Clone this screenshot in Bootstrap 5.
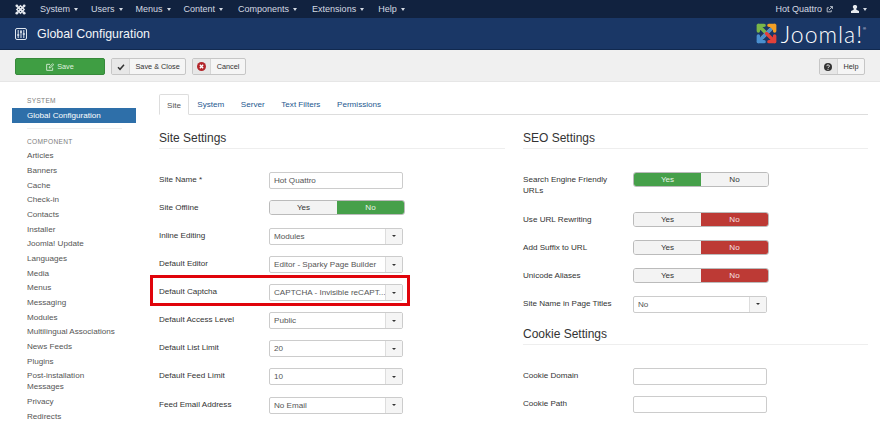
<!DOCTYPE html>
<html lang="en">
<head>
<meta charset="utf-8">
<title>Global Configuration</title>
<link href="https://cdn.jsdelivr.net/npm/bootstrap@5.3.0/dist/css/bootstrap.min.css" rel="stylesheet">
<style>
html,body{height:424px;overflow:hidden}
body{font-family:"Liberation Sans",Arial,sans-serif;font-size:8.1px;line-height:11px;color:#333;background:#fff}
.topbar{height:18px;background:#11223f;color:#d4dae3;padding-left:15px}
.topbar a{color:#d4dae3;text-decoration:none;font-size:9px}
.menu-row{margin-left:14px;gap:13px}
.mnu-wide{margin-right:2px}
.mnu-extra{margin-right:1px}
.caret-d{display:inline-block;width:0;height:0;border-left:2.4px solid transparent;border-right:2.4px solid transparent;border-top:3px solid #d4dae3;margin-left:4px;vertical-align:middle}
.user-menu{margin:0 13px 0 18px}
.headbar{height:32px;background:#1a3766;border-bottom:1px solid #11294f;color:#fff;padding-left:15px}
.headbar h1{font-size:12.4px;font-weight:400;margin:0 0 0 10px;color:#f3f5f8;line-height:32px;padding-top:1px}
.brand-box{margin-right:14px}
.brand-word{font-size:23px;letter-spacing:1px;color:#fff;margin-left:3px;font-family:Lato,"Liberation Sans",sans-serif;font-weight:300;line-height:30px}
.brand-reg{font-size:4px;line-height:4px;align-self:flex-start;margin-top:8px;color:#fff}
.toolbar{height:32px;background:#f0f0f0;border-bottom:1px solid #e6e6e6;padding:8px 15px 0}
.tbtn{height:17px;background:#f5f5f5;border:1px solid #c6c6c6;border-radius:2px;font-size:7.3px;color:#333;line-height:15px;margin-right:6px}
.tbtn .ic{width:18px;height:15px;background:#e7e7e7;border-right:1px solid #d6d6d6}
.tbtn .lbl{padding:0 5.5px}
.savebtn{width:90px;height:17px;background:#3f9e43;border:1px solid #37893b;border-radius:2px;color:#dff0df;font-size:7.3px;line-height:15px;margin-right:6px;gap:3px}
.helpbtn{margin:0}
.main-area{padding:0 0 0 12px}
.side{width:124px;flex:none;padding-top:13px}
.side-head{color:#7d7d7d;font-size:6.6px;letter-spacing:.3px;line-height:11px;padding-left:15px;height:11px}
.side-active{background:#2e6fa9;color:#fff;height:15px;line-height:15px;padding-left:15px;margin-top:2px}
.side-rule{height:1px;background:#efefef;margin:5px 14px 7px 15px}
.side-link{display:block;color:#555;padding:1.83px 0 1.83px 15px;width:105px;text-decoration:none;line-height:11px}
.first-link{margin-top:1.6px}
.content-area{padding:0 12px 0 23px;flex:1;min-width:0}
.tabrow{height:21px;border-bottom:1px solid #ddd;margin-top:12px;gap:0}
.tabitem{height:21px;line-height:21px;padding:0 8.3px;color:#25588f;text-decoration:none}
.tab-on{background:#fff;border:1px solid #ddd;border-bottom-color:#fff;border-radius:2px 2px 0 0;color:#555;padding:0 7px}
.cols{margin-top:15px}
.col-left{width:364px;flex:none}
.col-right{flex:1;min-width:0}
.sec-title{font-size:12px;font-weight:400;color:#333;line-height:16px;margin:0;border-bottom:1px solid #eee;height:19px}
.sec-left{margin-right:18px}
.left-form{padding-top:22.8px}
.form-line{height:28.1px;display:flex;align-items:flex-start}
.form-label{width:110px;flex:none;padding:2px 12px 0 0;color:#333}
.txt{width:134px;height:17px;border:1px solid #ccc;border-radius:2px;padding:0 4px;line-height:15px;color:#555;background:#fff}
.sel{width:134px;height:17px;border:1px solid #ccc;border-radius:2px;color:#555;background:#fff;line-height:15px;display:flex}
.sel .val{flex:1;padding:0 4px;overflow:hidden;white-space:nowrap;min-width:0}
.sel .arr{width:17px;flex:none;background:#f5f5f5;border-left:1px solid #ddd;display:flex;align-items:center;justify-content:center}
.caret-k{display:block;width:0;height:0;border-left:2.2px solid transparent;border-right:2.2px solid transparent;border-top:2.8px solid #333}
.tog{width:136px;height:15px;margin-top:.5px;display:flex;border:1px solid #bbb;border-radius:3px;overflow:hidden;text-align:center;line-height:13px}
.tog span{flex:1;background:#f3f3f3;color:#333}
.tog .on-g{background:#46a04a;color:#e8f4e8}
.tog .on-r{background:#bd3a35;color:#f6e2e2}
.capt-frame{position:absolute;left:150px;top:275px;width:260px;height:31px;border:3px solid #e0040b;pointer-events:none}
.right-form{padding-top:22.8px}
.form-line.tall{height:39.8px}
.gap-title{margin-top:2px;margin-bottom:22.7px}
</style>
</head>
<body>
<div class="topbar d-flex align-items-center">
  <svg width="11" height="11" viewBox="0 0 24 24" aria-hidden="true"><path d="M5 5l14 14M19 5L5 19" stroke="#e4e8ee" stroke-width="4"/><path d="M12 4l8 8-8 8-8-8z" fill="none" stroke="#e4e8ee" stroke-width="3"/><circle cx="4" cy="4" r="3" fill="#e4e8ee"/><circle cx="20" cy="4" r="3" fill="#e4e8ee"/><circle cx="4" cy="20" r="3" fill="#e4e8ee"/><circle cx="20" cy="20" r="3" fill="#e4e8ee"/></svg>
  <div class="d-flex menu-row flex-grow-1">
    <a href="#">System<i class="caret-d"></i></a><a href="#">Users<i class="caret-d"></i></a><a href="#">Menus<i class="caret-d"></i></a><a href="#" class="mnu-wide">Content<i class="caret-d"></i></a><a href="#" class="mnu-wide">Components<i class="caret-d"></i></a><a href="#" class="mnu-extra">Extensions<i class="caret-d"></i></a><a href="#">Help<i class="caret-d"></i></a>
  </div>
  <a href="#" class="d-flex align-items-center gap-1">Hot Quattro
    <svg width="7" height="7" viewBox="0 0 12 12" aria-hidden="true"><path d="M9 7v3H2V3h3M7 1h4v4M11 1L5 7" fill="none" stroke="#d4dae3" stroke-width="1.4"/></svg></a>
  <span class="d-flex align-items-center user-menu">
    <svg width="8" height="8" viewBox="0 0 12 12" aria-hidden="true"><path d="M6 0a3 3 0 0 1 2 5.4V7l4 2v3H0V9l4-2V5.400A3 3 0 0 1 6 0z" fill="#e8ebef"/></svg><i class="caret-d"></i>
  </span>
</div>
<div class="headbar d-flex align-items-center">
  <svg width="12" height="12" viewBox="0 0 12 12" aria-hidden="true"><rect x=".5" y=".5" width="11" height="11" rx="1.500" fill="none" stroke="#dfe6ef"/><path d="M3.200 2v8M6 2v8M8.800 2v8" stroke="#dfe6ef"/><path d="M2.200 7h2M5 4h2M7.800 6h2" stroke="#dfe6ef" stroke-width="1.500"/></svg>
  <h1 class="flex-grow-1">Global Configuration</h1>
  <span class="d-flex align-items-center brand-box">
    <svg width="23" height="23" viewBox="0 0 24 24" aria-hidden="true">
      <g fill="none" stroke-width="3.600" stroke-linecap="round" stroke-linejoin="round">
        <path d="M3.500 9.500V3.500M3.500 3.500h6M3.500 3.500l8 8" stroke="#7ab648"/>
        <path d="M20.500 3.500h-6M20.500 3.500v6M20.500 3.500L8 16" stroke="#f4a025"/>
        <path d="M3.500 14.500v6M3.500 20.500h6M3.500 20.500L16 8" stroke="#4a90d0"/>
        <path d="M20.500 14.500v6M20.500 20.500h-6M20.500 20.500L12 12" stroke="#e2413a"/>
      </g>
    </svg>
    <span class="brand-word">Joomla!</span><span class="brand-reg">®</span>
  </span>
</div>
<div class="toolbar d-flex">
  <div class="savebtn d-flex align-items-center justify-content-center">
    <svg width="8" height="8" viewBox="0 0 12 12" aria-hidden="true"><path d="M10 7v4H1V2h5M5 6l5-5 1.500 1.500-5 5H5z" fill="none" stroke="#dff0df" stroke-width="1.300"/></svg>Save
  </div>
  <div class="tbtn d-flex">
    <span class="ic d-flex align-items-center justify-content-center"><svg width="8" height="8" viewBox="0 0 12 12" aria-hidden="true"><path d="M1.500 6.500l3 3 6-7" fill="none" stroke="#333" stroke-width="2.200"/></svg></span><span class="lbl">Save &amp; Close</span>
  </div>
  <div class="tbtn d-flex">
    <span class="ic d-flex align-items-center justify-content-center"><svg width="9" height="9" viewBox="0 0 12 12" aria-hidden="true"><circle cx="6" cy="6" r="6" fill="#b3262b"/><path d="M3.800 3.800l4.400 4.400M8.200 3.800l-4.400 4.400" stroke="#fff" stroke-width="1.800"/></svg></span><span class="lbl">Cancel</span>
  </div>
  <div class="tbtn helpbtn d-flex ms-auto">
    <span class="ic d-flex align-items-center justify-content-center"><svg width="8" height="8" viewBox="0 0 12 12" aria-hidden="true"><circle cx="6" cy="6" r="6" fill="#333"/><path d="M4.200 4.700a1.900 1.900 0 1 1 2.700 1.700c-.6.300-.9.600-.9 1.200" fill="none" stroke="#fff" stroke-width="1.300"/><circle cx="6" cy="9.400" r=".9" fill="#fff"/></svg></span><span class="lbl">Help</span>
  </div>
</div>
<div class="main-area d-flex">
  <nav class="side">
    <div class="side-head">SYSTEM</div>
    <div class="side-active">Global Configuration</div>
    <div class="side-rule"></div>
    <div class="side-head">COMPONENT</div>
    <a class="side-link first-link" href="#">Articles</a>
    <a class="side-link" href="#">Banners</a>
    <a class="side-link" href="#">Cache</a>
    <a class="side-link" href="#">Check-in</a>
    <a class="side-link" href="#">Contacts</a>
    <a class="side-link" href="#">Installer</a>
    <a class="side-link" href="#">Joomla! Update</a>
    <a class="side-link" href="#">Languages</a>
    <a class="side-link" href="#">Media</a>
    <a class="side-link" href="#">Menus</a>
    <a class="side-link" href="#">Messaging</a>
    <a class="side-link" href="#">Modules</a>
    <a class="side-link" href="#">Multilingual Associations</a>
    <a class="side-link" href="#">News Feeds</a>
    <a class="side-link" href="#">Plugins</a>
    <a class="side-link" href="#">Post-installation Messages</a>
    <a class="side-link" href="#">Privacy</a>
    <a class="side-link" href="#">Redirects</a>
  </nav>
  <div class="content-area">
    <div class="tabrow d-flex">
      <a class="tabitem tab-on" href="#">Site</a>
      <a class="tabitem" href="#">System</a>
      <a class="tabitem" href="#">Server</a>
      <a class="tabitem" href="#">Text Filters</a>
      <a class="tabitem" href="#">Permissions</a>
    </div>
    <div class="cols d-flex">
      <div class="col-left">
        <h2 class="sec-title sec-left">Site Settings</h2>
        <div class="left-form">
          <div class="form-line"><div class="form-label">Site Name *</div><div class="txt">Hot Quattro</div></div>
          <div class="form-line"><div class="form-label">Site Offline</div><div class="tog"><span>Yes</span><span class="on-g">No</span></div></div>
          <div class="form-line"><div class="form-label">Inline Editing</div><div class="sel"><span class="val">Modules</span><span class="arr"><i class="caret-k"></i></span></div></div>
          <div class="form-line"><div class="form-label">Default Editor</div><div class="sel"><span class="val">Editor - Sparky Page Builder</span><span class="arr"><i class="caret-k"></i></span></div></div>
          <div class="form-line"><div class="form-label">Default Captcha</div><div class="sel"><span class="val">CAPTCHA - Invisible reCAPT...</span><span class="arr"><i class="caret-k"></i></span></div></div>
          <div class="form-line"><div class="form-label">Default Access Level</div><div class="sel"><span class="val">Public</span><span class="arr"><i class="caret-k"></i></span></div></div>
          <div class="form-line"><div class="form-label">Default List Limit</div><div class="sel"><span class="val">20</span><span class="arr"><i class="caret-k"></i></span></div></div>
          <div class="form-line"><div class="form-label">Default Feed Limit</div><div class="sel"><span class="val">10</span><span class="arr"><i class="caret-k"></i></span></div></div>
          <div class="form-line"><div class="form-label">Feed Email Address</div><div class="sel"><span class="val">No Email</span><span class="arr"><i class="caret-k"></i></span></div></div>
        </div>
      </div>
      <div class="col-right">
        <h2 class="sec-title">SEO Settings</h2>
        <div class="right-form">
          <div class="form-line tall"><div class="form-label">Search Engine Friendly URLs</div><div class="tog"><span class="on-g">Yes</span><span>No</span></div></div>
          <div class="form-line"><div class="form-label">Use URL Rewriting</div><div class="tog"><span>Yes</span><span class="on-r">No</span></div></div>
          <div class="form-line"><div class="form-label">Add Suffix to URL</div><div class="tog"><span>Yes</span><span class="on-r">No</span></div></div>
          <div class="form-line"><div class="form-label">Unicode Aliases</div><div class="tog"><span>Yes</span><span class="on-r">No</span></div></div>
          <div class="form-line"><div class="form-label">Site Name in Page Titles</div><div class="sel"><span class="val">No</span><span class="arr"><i class="caret-k"></i></span></div></div>
        </div>
        <h2 class="sec-title gap-title">Cookie Settings</h2>
        <div class="form-line"><div class="form-label">Cookie Domain</div><div class="txt"></div></div>
        <div class="form-line"><div class="form-label">Cookie Path</div><div class="txt"></div></div>
      </div>
    </div>
  </div>
</div>
<div class="capt-frame"></div>
</body>
</html>
